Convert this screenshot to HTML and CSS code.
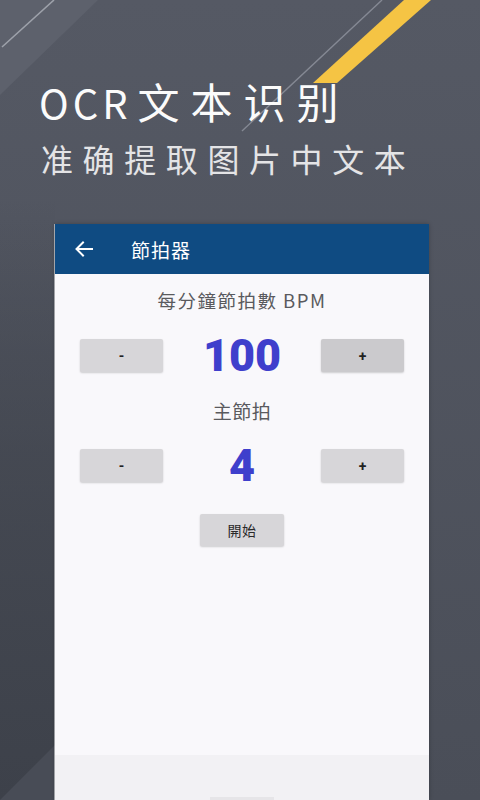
FILE: index.html
```html
<!DOCTYPE html>
<html lang="zh">
<head>
<meta charset="utf-8">
<title>OCR文本识别</title>
<link rel="stylesheet" href="styles.css">
</head>
<body>
<div class="stage">
  <svg class="deco" width="480" height="800" viewBox="0 0 480 800" xmlns="http://www.w3.org/2000/svg">
    <defs>
      <linearGradient id="bg" x1="0" y1="0" x2="0" y2="1">
        <stop offset="0" stop-color="#555964"/>
        <stop offset="1" stop-color="#4a4e58"/>
      </linearGradient>
      <linearGradient id="left" x1="0" y1="0" x2="0" y2="1">
        <stop offset="0" stop-color="#3d414a" stop-opacity="0"/>
        <stop offset="0.45" stop-color="#40444d" stop-opacity="0.7"/>
        <stop offset="1" stop-color="#3d414a"/>
      </linearGradient>
    </defs>
    <rect width="480" height="800" fill="url(#bg)"/>
    <polygon points="0,0 98,0 0,95" fill="#5d616c"/>
    <polygon points="0,200 55,200 55,800 0,800" fill="url(#left)"/>
    <polygon points="0,800 55,745 55,800" fill="#484c56"/>
    <line x1="54" y1="0" x2="2" y2="47" stroke="#9da1aa" stroke-width="1.6"/>
    <line x1="382" y1="0" x2="242" y2="131" stroke="#858994" stroke-width="1.4"/>
    <polygon points="404,0 431,0 337,83 313,83" fill="#f5c444"/>
  </svg>

  <header class="promo">
    <h1 class="promo-title"><span class="latin">OCR</span>文本识别</h1>
    <p class="promo-sub">准确提取图片中文本</p>
  </header>

  <main class="screen">
    <div class="appbar">
      <svg class="back" width="18" height="16" viewBox="0 0 18 16" xmlns="http://www.w3.org/2000/svg">
        <path d="M17 8H2M8 1.5L1.5 8L8 14.5" fill="none" stroke="#ffffff" stroke-width="2" stroke-linecap="square"/>
      </svg>
      <span class="appbar-title">節拍器</span>
    </div>
    <div class="content">
      <div class="label">每分鐘節拍數 BPM</div>
      <div class="row">
        <button class="btn">-</button>
        <div class="value">100</div>
        <button class="btn btn-pressed">+</button>
      </div>
      <div class="label label-2">主節拍</div>
      <div class="row row-2">
        <button class="btn">-</button>
        <div class="value">4</div>
        <button class="btn">+</button>
      </div>
      <button class="btn btn-start">開始</button>
    </div>
    <div class="navbar"><span class="nav-pill"></span></div>
  </main>
</div>
</body>
</html>
```

FILE: styles.css
```css
* { box-sizing: border-box; }
html, body { margin: 0; padding: 0; }
body {
  width: 480px;
  height: 800px;
  overflow: hidden;
  font-family: "Noto Sans CJK SC", "Noto Sans CJK TC", "Noto Sans", sans-serif;
}
.stage {
  position: relative;
  width: 480px;
  height: 800px;
  overflow: hidden;
  display: flex;
  flex-direction: column;
}
.deco {
  position: absolute;
  left: 0;
  top: 0;
}
.promo {
  position: relative;
  padding: 74px 0 0 39px;
  height: 224px;
}
.promo-title {
  margin: 0;
  font-size: 42px;
  line-height: 54px;
  font-weight: 400;
  letter-spacing: 11px;
  color: #fbfbfb;
}
.latin {
  font-size: 40px;
  letter-spacing: 4px;
  margin-right: 6px;
}
.promo-sub {
  margin: 8px 0 0 2px;
  font-size: 32px;
  line-height: 42px;
  font-weight: 400;
  letter-spacing: 9.6px;
  color: #e4e4e6;
}
.screen {
  position: relative;
  margin-left: 55px;
  width: 374px;
  flex: 1;
  display: flex;
  flex-direction: column;
  background: #f9f8fb;
  box-shadow: -1px 0 0 rgba(255,255,255,0.5), 0 0 4px rgba(0,0,0,0.25);
}
.appbar {
  height: 50px;
  background: #0f4b82;
  display: flex;
  align-items: center;
  padding-left: 20px;
}
.back { display: block; }
.appbar-title {
  margin-left: 38px;
  font-size: 19px;
  letter-spacing: 1px;
  color: #ffffff;
  font-family: "Noto Sans CJK TC", "Noto Sans", sans-serif;
}
.content {
  flex: 1;
  display: flex;
  flex-direction: column;
  align-items: center;
  padding-top: 14px;
}
.label {
  font-size: 18.5px;
  line-height: 24px;
  letter-spacing: 1.5px;
  color: #5a5a5e;
  font-family: "Noto Sans CJK TC", "Noto Sans", sans-serif;
}
.label-2 { margin-top: 27px; font-size: 19px; letter-spacing: 0.5px; }
.row {
  margin-top: 27px;
  width: 100%;
  padding: 0 25px;
  display: flex;
  justify-content: space-between;
  align-items: center;
}
.row-2 { margin-top: 26px; }
.btn {
  width: 83px;
  height: 33px;
  border: 0;
  border-radius: 2px;
  background: #d7d6d9;
  box-shadow: 0 1px 2px rgba(0,0,0,0.18);
  font-family: Roboto, "Noto Sans", sans-serif;
  font-size: 14px;
  font-weight: 700;
  color: #222;
  padding: 0;
}
.btn-pressed { background: #cbcacd; }
.value {
  font-family: Roboto, "Noto Sans", sans-serif;
  font-weight: 900;
  font-size: 45px;
  line-height: 33px;
  color: #3f3fcc;
}
.btn-start {
  margin-top: 32px;
  width: 84px;
  height: 32px;
  font-family: "Noto Sans CJK TC", "Noto Sans", sans-serif;
  font-size: 14px;
  font-weight: 400;
  letter-spacing: 0.5px;
  color: #2a2a2a;
}
.navbar {
  height: 45px;
  background: #f2f1f4;
  display: flex;
  justify-content: center;
  align-items: flex-end;
}
.nav-pill {
  width: 64px;
  height: 3px;
  background: #e6e5e8;
}
```
